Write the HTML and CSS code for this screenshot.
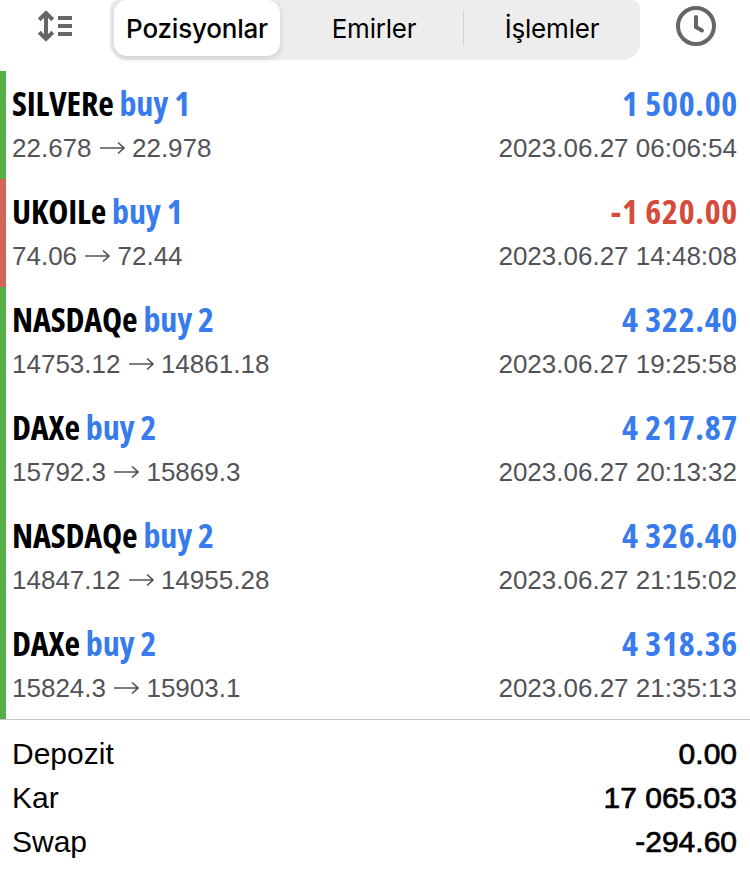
FILE: index.html
```html
<!DOCTYPE html>
<html lang="tr">
<head>
    <meta charset="UTF-8">
    <meta name="viewport" content="width=device-width, initial-scale=1.0">
    <title>Pozisyonlar</title>
    <link rel="stylesheet" href="styles.css">
</head>
<body>
    <div class="toolbar">
        <svg class="sort-icon" width="36" height="32" viewBox="0 0 36 32">
            <path d="M9 3V29M2.2 9.7L9 3.1L15.8 9.7M2.2 22.3L9 28.9L15.8 22.3" />
            <path d="M21 8H35M21 16H35M21 24H35" />
        </svg>
        <div class="tabs">
            <div class="tab active">Pozisyonlar</div>
            <div class="tab orders">Emirler</div>
            <div class="tab deals">İşlemler</div>
        </div>
        <svg class="clock-icon" width="40" height="40" viewBox="0 0 40 40">
            <circle cx="20" cy="20" r="18" />
            <path d="M20 11V21L26 24.4" />
        </svg>
    </div>

    <div class="positions">
        <div class="position">
            <div class="line"><div class="symbol">SILVERe <span class="buy">buy 1</span></div><div class="profit">1 500.00</div></div>
            <div class="line details"><div>22.678 <svg class="arrow" viewBox="0 0 26 14"><path d="M1 7H25M19 1.5L25 7L19 12.5" /></svg> 22.978</div><div>2023.06.27 06:06:54</div></div>
        </div>
        <div class="position loss">
            <div class="line"><div class="symbol">UKOILe <span class="buy">buy 1</span></div><div class="profit">-1 620.00</div></div>
            <div class="line details"><div>74.06 <svg class="arrow" viewBox="0 0 26 14"><path d="M1 7H25M19 1.5L25 7L19 12.5" /></svg> 72.44</div><div>2023.06.27 14:48:08</div></div>
        </div>
        <div class="position">
            <div class="line"><div class="symbol">NASDAQe <span class="buy">buy 2</span></div><div class="profit">4 322.40</div></div>
            <div class="line details"><div>14753.12 <svg class="arrow" viewBox="0 0 26 14"><path d="M1 7H25M19 1.5L25 7L19 12.5" /></svg> 14861.18</div><div>2023.06.27 19:25:58</div></div>
        </div>
        <div class="position">
            <div class="line"><div class="symbol">DAXe <span class="buy">buy 2</span></div><div class="profit">4 217.87</div></div>
            <div class="line details"><div>15792.3 <svg class="arrow" viewBox="0 0 26 14"><path d="M1 7H25M19 1.5L25 7L19 12.5" /></svg> 15869.3</div><div>2023.06.27 20:13:32</div></div>
        </div>
        <div class="position">
            <div class="line"><div class="symbol">NASDAQe <span class="buy">buy 2</span></div><div class="profit">4 326.40</div></div>
            <div class="line details"><div>14847.12 <svg class="arrow" viewBox="0 0 26 14"><path d="M1 7H25M19 1.5L25 7L19 12.5" /></svg> 14955.28</div><div>2023.06.27 21:15:02</div></div>
        </div>
        <div class="position">
            <div class="line"><div class="symbol">DAXe <span class="buy">buy 2</span></div><div class="profit">4 318.36</div></div>
            <div class="line details"><div>15824.3 <svg class="arrow" viewBox="0 0 26 14"><path d="M1 7H25M19 1.5L25 7L19 12.5" /></svg> 15903.1</div><div>2023.06.27 21:35:13</div></div>
        </div>
    </div>

    <div class="summary">
        <div class="total"><span>Depozit</span><span class="amount">0.00</span></div>
        <div class="total"><span>Kar</span><span class="amount">17 065.03</span></div>
        <div class="total"><span>Swap</span><span class="amount">-294.60</span></div>
    </div>
</body>
</html>
```
FILE: styles.css
```css
* {
    box-sizing: border-box;
}
body {
    margin: 0;
    height: 871px;
    overflow: hidden;
    background: #fff;
    color: #000;
    font-family: "Liberation Sans", Arial, sans-serif;
}
.toolbar {
    display: flex;
    align-items: flex-start;
    height: 71px;
}
.sort-icon {
    margin: 10px 0 0 37px;
    fill: none;
    stroke: #666;
    stroke-width: 4;
}
.clock-icon {
    margin: 6px 0 0 36px;
    fill: none;
    stroke: #666;
    stroke-width: 4;
    stroke-linecap: round;
}
.tabs {
    display: flex;
    width: 530px;
    height: 60px;
    margin-left: 37px;
    padding: 0 0 4px 4px;
    background: #ededed;
    border-radius: 8px 8px 17px 17px;
}
.tab {
    font-family: Inter, sans-serif;
    font-size: 26px;
    line-height: 57px;
    text-align: center;
    letter-spacing: -0.2px;
}
.active {
    width: 166px;
    background: #fff;
    border-radius: 13px;
    font-weight: 500;
    box-shadow: 0 2px 6px rgba(0, 0, 0, 0.15);
}
.orders {
    width: 184px;
    padding-left: 4px;
    background: linear-gradient(#d2d2d2, #d2d2d2) no-repeat right 10px / 1px 36px;
}
.deals {
    width: 176px;
}
.position {
    height: 108px;
    padding: 9px 13px 0 6px;
    border-left: 6px solid #54b045;
}
.loss {
    border-left-color: #d1655a;
}
.line {
    display: flex;
    justify-content: space-between;
}
.symbol,
.profit {
    height: 48px;
    font-family: "Open Sans", sans-serif;
    font-size: 34px;
    font-weight: 700;
    font-stretch: 75%;
    line-height: 46px;
    white-space: nowrap;
}
.symbol {
    letter-spacing: -0.15px;
}
.profit {
    letter-spacing: 0.7px;
    margin-right: -1px;
}
.buy,
.profit {
    color: #387bec;
}
.loss .profit {
    color: #d44b3c;
}
.details {
    color: #535357;
    font-size: 26px;
    line-height: 40px;
}
.arrow {
    width: 26px;
    height: 14px;
    vertical-align: 2px;
    fill: none;
    stroke: #535357;
    stroke-width: 1.6;
}
.summary {
    border-top: 1px solid #c6c6c8;
    padding: 12px 13px 0 12px;
}
.total {
    display: flex;
    justify-content: space-between;
    height: 44px;
    font-size: 30px;
    line-height: 44px;
}
.amount {
    -webkit-text-stroke: 0.7px #000;
}
```
